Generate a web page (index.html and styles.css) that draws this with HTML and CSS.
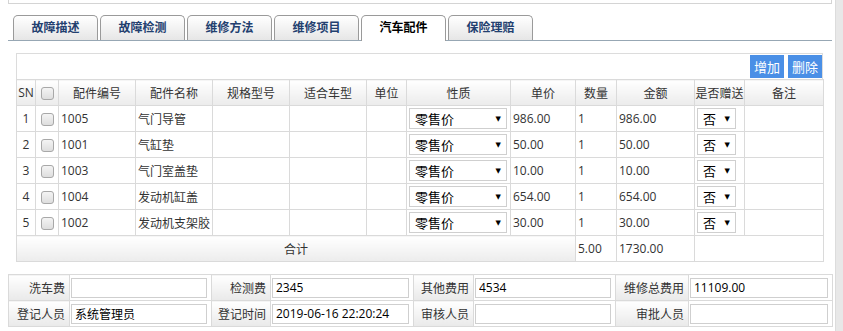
FILE: index.html
```html
<!DOCTYPE html>
<html lang="zh-CN">
<head>
    <meta charset="UTF-8">
    <meta name="viewport" content="width=device-width, initial-scale=1.0">
    <title>汽车配件</title>
    <link rel="stylesheet" href="styles.css">
</head>
<body>
    <div class="page">
        <div class="top-panel"></div>

        <!-- 选项卡 -->
        <ul class="tabs">
            <li class="tab">故障描述</li>
            <li class="tab">故障检测</li>
            <li class="tab">维修方法</li>
            <li class="tab">维修项目</li>
            <li class="tab active">汽车配件</li>
            <li class="tab">保险理赔</li>
        </ul>

        <div class="parts">
            <div class="toolbar">
                <button class="btn">增加</button>
                <button class="btn">删除</button>
            </div>
            <table class="grid">
                <colgroup>
                    <col style="width:19px"><col style="width:23px"><col style="width:77px"><col style="width:77px">
                    <col style="width:77px"><col style="width:77px"><col style="width:40px"><col style="width:104px">
                    <col style="width:65px"><col style="width:41px"><col style="width:78px"><col style="width:50px">
                    <col style="width:79px">
                </colgroup>
                <thead>
                    <tr>
                        <th class="sn">SN</th>
                        <th><span class="check"></span></th>
                        <th>配件编号</th>
                        <th>配件名称</th>
                        <th>规格型号</th>
                        <th>适合车型</th>
                        <th>单位</th>
                        <th>性质</th>
                        <th>单价</th>
                        <th>数量</th>
                        <th>金额</th>
                        <th class="tight">是否赠送</th>
                        <th>备注</th>
                    </tr>
                </thead>
                <tbody>
                    <tr>
                        <td class="sn">1</td><td class="c"><span class="check"></span></td>
                        <td>1005</td><td>气门导管</td><td></td><td></td><td></td>
                        <td><div class="select wide"><span>零售价</span><i>▼</i></div></td>
                        <td>986.00</td><td>1</td><td>986.00</td>
                        <td><div class="select small"><span>否</span><i>▼</i></div></td><td></td>
                    </tr>
                    <tr>
                        <td class="sn">2</td><td class="c"><span class="check"></span></td>
                        <td>1001</td><td>气缸垫</td><td></td><td></td><td></td>
                        <td><div class="select wide"><span>零售价</span><i>▼</i></div></td>
                        <td>50.00</td><td>1</td><td>50.00</td>
                        <td><div class="select small"><span>否</span><i>▼</i></div></td><td></td>
                    </tr>
                    <tr>
                        <td class="sn">3</td><td class="c"><span class="check"></span></td>
                        <td>1003</td><td>气门室盖垫</td><td></td><td></td><td></td>
                        <td><div class="select wide"><span>零售价</span><i>▼</i></div></td>
                        <td>10.00</td><td>1</td><td>10.00</td>
                        <td><div class="select small"><span>否</span><i>▼</i></div></td><td></td>
                    </tr>
                    <tr>
                        <td class="sn">4</td><td class="c"><span class="check"></span></td>
                        <td>1004</td><td>发动机缸盖</td><td></td><td></td><td></td>
                        <td><div class="select wide"><span>零售价</span><i>▼</i></div></td>
                        <td>654.00</td><td>1</td><td>654.00</td>
                        <td><div class="select small"><span>否</span><i>▼</i></div></td><td></td>
                    </tr>
                    <tr>
                        <td class="sn">5</td><td class="c"><span class="check"></span></td>
                        <td>1002</td><td>发动机支架胶</td><td></td><td></td><td></td>
                        <td><div class="select wide"><span>零售价</span><i>▼</i></div></td>
                        <td>30.00</td><td>1</td><td>30.00</td>
                        <td><div class="select small"><span>否</span><i>▼</i></div></td><td></td>
                    </tr>
                    <tr class="total">
                        <td colspan="9" class="total-label">合计</td>
                        <td>5.00</td>
                        <td>1730.00</td>
                        <td colspan="2"></td>
                    </tr>
                </tbody>
            </table>
        </div>

        <!-- 费用信息 -->
        <table class="form">
            <colgroup>
                <col style="width:61px"><col style="width:142px"><col style="width:59px"><col style="width:143px">
                <col style="width:60px"><col style="width:142px"><col style="width:73px"><col style="width:144px">
            </colgroup>
            <tr>
                <th>洗车费</th><td><input type="text" value=""></td>
                <th>检测费</th><td><input type="text" value="2345"></td>
                <th>其他费用</th><td><input type="text" value="4534"></td>
                <th>维修总费用</th><td><input type="text" value="11109.00"></td>
            </tr>
            <tr>
                <th>登记人员</th><td><input type="text" value="系统管理员"></td>
                <th>登记时间</th><td><input type="text" value="2019-06-16 22:20:24"></td>
                <th>审核人员</th><td><input type="text" value=""></td>
                <th>审批人员</th><td><input type="text" value=""></td>
            </tr>
        </table>
    </div>
    <div class="scrollbar"></div>
</body>
</html>
```

FILE: styles.css
```css
body {
    margin: 0;
    display: flex;
    background-color: #fff;
    font-family: "Open Sans", "Noto Sans CJK SC", sans-serif;
    font-size: 12px;
    color: #333;
    height: 331px;
    overflow: hidden;
}

.page {
    width: 835px;
    padding: 0 3px 0 8px;
    box-sizing: border-box;
}

.scrollbar {
    width: 8px;
    background-color: #e8e8e8;
    border-left: 1px solid #dcdcdc;
}

.top-panel {
    height: 3px;
    border: 1px solid #d4d4d4;
    border-top: none;
}

/* 选项卡 */
.tabs {
    list-style: none;
    margin: 11px 0 0;
    padding: 0 0 0 5px;
    display: flex;
    gap: 2px;
    border-bottom: 1px solid #97a7b4;
    height: 25px;
}

.tab {
    width: 85px;
    height: 25px;
    box-sizing: border-box;
    border: 1px solid #9a9a9a;
    border-bottom: none;
    border-radius: 5px 5px 0 0;
    background: linear-gradient(#ffffff, #e6e6e6);
    color: #23406f;
    font-weight: bold;
    font-size: 12px;
    text-align: center;
    line-height: 24px;
}

.tab.active {
    height: 26px;
    background: #fff;
    color: #000;
}

/* 配件表格 */
.parts {
    margin: 12px 0 0 8px;
    width: 807px;
}

.toolbar {
    height: 26px;
    box-sizing: border-box;
    border: 1px solid #dcdcdc;
    border-bottom: none;
    padding-top: 1px;
    display: flex;
    justify-content: flex-end;
    gap: 4px;
}

.btn {
    width: 34px;
    height: 23px;
    padding: 0;
    border: none;
    background-color: #4a8fe6;
    color: #fff;
    font-family: "Noto Sans CJK SC", sans-serif;
    font-size: 13px;
}

.grid {
    width: 807px;
    table-layout: fixed;
    border-collapse: collapse;
}

.grid th,
.grid td {
    border: 1px solid #dadada;
    height: 25px;
    padding: 0 2px;
    box-sizing: content-box;
    white-space: nowrap;
    overflow: hidden;
}

.grid th {
    background: linear-gradient(#ffffff, #ebebeb);
    font-weight: normal;
    text-align: center;
}

.grid th.sn {
    padding: 0;
}

.grid th.tight {
    padding: 0;
}

.grid td.sn,
.grid td.c {
    text-align: center;
    padding: 0;
}

.check {
    display: inline-block;
    width: 11px;
    height: 11px;
    border: 1px solid #a8a8a8;
    border-radius: 3px;
    background: linear-gradient(#f4f4f4, #dedede);
    vertical-align: middle;
}

.select {
    display: flex;
    justify-content: space-between;
    align-items: center;
    height: 21px;
    box-sizing: border-box;
    border: 1px solid #cfcfcf;
    background: #fff;
    padding: 0 5px 0 5px;
    font-family: "Noto Sans CJK SC", sans-serif;
    font-size: 13px;
    color: #000;
}

.select i {
    font-style: normal;
    font-size: 7px;
    font-family: "DejaVu Sans", sans-serif;
}

.select.wide {
    width: 98px;
}

.select.small {
    width: 39px;
}

.total td {
    background: #fff;
}

.grid .total-label {
    background: linear-gradient(#ffffff, #ececec);
    text-align: center;
}

/* 费用信息 */
.form {
    margin-top: 12px;
    width: 824px;
    table-layout: fixed;
    border-collapse: collapse;
}

.form th,
.form td {
    border: 1px solid #dadada;
    height: 26px;
    box-sizing: border-box;
}

.form th {
    background: linear-gradient(#ffffff, #e9e9e9);
    font-weight: normal;
    text-align: right;
    padding: 0 4px 0 0;
    white-space: nowrap;
}

.form td {
    padding: 0 4px 0 1px;
}

.form input {
    display: block;
    width: 100%;
    height: 20px;
    box-sizing: border-box;
    border: 1px solid #cfcfcf;
    padding: 0 3px;
    font-family: "Open Sans", "Noto Sans CJK SC", sans-serif;
    font-size: 12px;
    color: #000;
    outline: none;
}
```
